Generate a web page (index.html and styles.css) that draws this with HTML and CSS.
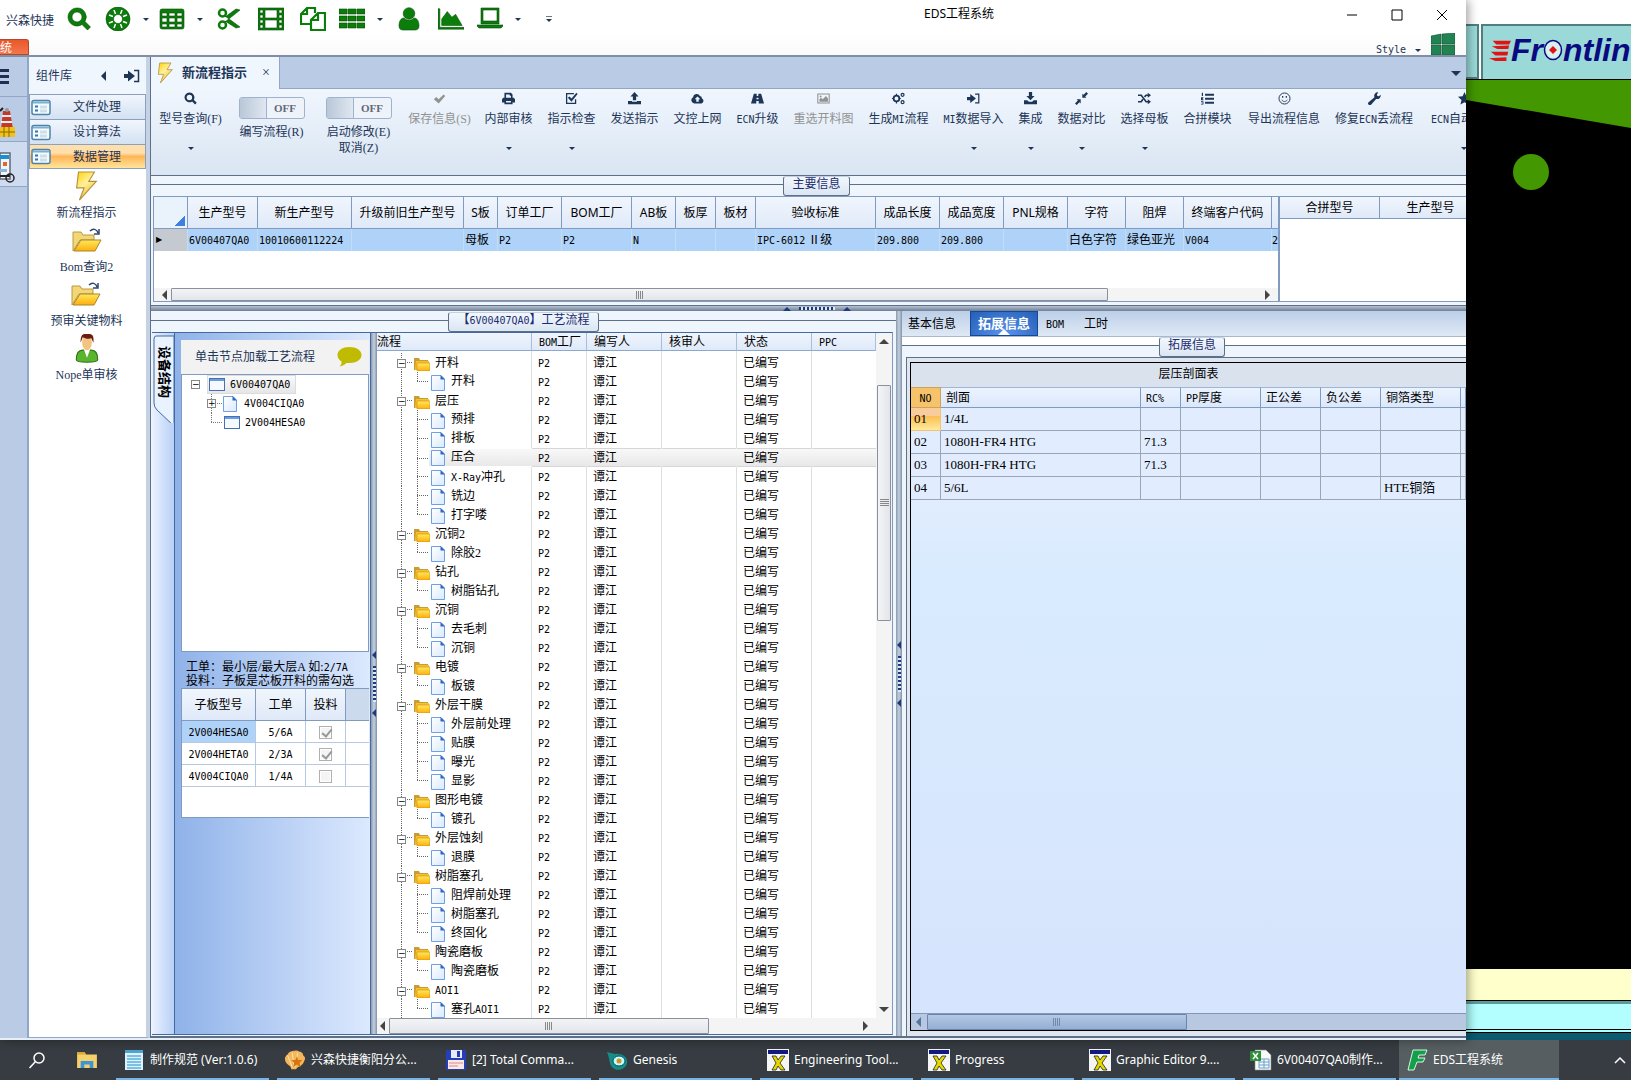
FILE: index.html
```html
<!DOCTYPE html>
<html lang="zh-CN">
<head>
    <meta charset="UTF-8">
    <meta name="viewport" content="width=device-width, initial-scale=1.0">
    <title>EDS工程系统</title>
    <link rel="stylesheet" href="styles.css">
</head>
<body>
    <!-- Icon sprite -->
    <svg class="sprite" aria-hidden="true">
        <symbol id="search" viewBox="0 0 24 24"><path d="M10 1a9 9 0 1 0 5 16.500l5.500 5.500 3-3-5.500-5.500A9 9 0 0 0 10 1zm0 4a5 5 0 1 1 0 10 5 5 0 0 1 0-10z" fill-rule="evenodd"/></symbol>
        <symbol id="ring" viewBox="0 0 24 24"><path d="M12 0a12 12 0 1 0 0 24 12 12 0 0 0 0-24zm0 7.500a4.500 4.500 0 1 1 0 9 4.500 4.500 0 0 1 0-9z" fill-rule="evenodd"/><path d="M8 3l1.500 4M16 3l-1.500 4M8 21l1.500-4M16 21l-1.500-4M3 8l4 1.500M3 16l4-1.500M21 8l-4 1.500M21 16l-4-1.500" stroke="#fff" stroke-width="1.500"/></symbol>
        <symbol id="grid" viewBox="0 0 24 24"><path d="M2 2h20a2 2 0 0 1 2 2v16a2 2 0 0 1-2 2H2a2 2 0 0 1-2-2V4a2 2 0 0 1 2-2zm0 4v3h5V6zm7 0v3h6V6zm8 0v3h5V6zM2 11v4h5v-4zm7 0v4h6v-4zm8 0v4h5v-4zM2 17v3h5v-3zm7 0v3h6v-3zm8 0v3h5v-3z" fill-rule="evenodd"/></symbol>
        <symbol id="scissors" viewBox="0 0 24 24"><path d="M8 9L23 20l-4 1L8 14M8 15L23 3l-4-1L8 10"/><circle cx="5.500" cy="6" r="3.500" fill="none" stroke="currentColor" stroke-width="2.500"/><circle cx="5.500" cy="18" r="3.500" fill="none" stroke="currentColor" stroke-width="2.500"/></symbol>
        <symbol id="film" viewBox="0 0 26 24"><path d="M0 1h26v22H0zm2 2v3h3V3zm0 5v3h3V8zm0 5v3h3v-3zm0 5v3h3v-3zM7 3v8h12V3zm0 10v8h12v-8zM21 3v3h3V3zm0 5v3h3V8zm0 5v3h3v-3zm0 5v3h3v-3z" fill-rule="evenodd"/></symbol>
        <symbol id="copy" viewBox="0 0 26 24"><path d="M7 1h8v5M1 7v10h9M7 1v6H1zM18 6h7v17H11V13zM18 6v7h-7" fill="none" stroke="currentColor" stroke-width="2.200"/></symbol>
        <symbol id="bars" viewBox="0 0 26 24"><path d="M0 2h8v5H0zM9 2h8v5H9zM18 2h8v5h-8zM0 9h8v5H0zM9 9h8v5H9zM18 9h8v5h-8zM0 16h8v5H0zM9 16h8v5H9zM18 16h8v5h-8z"/></symbol>
        <symbol id="user" viewBox="0 0 20 24"><circle cx="10" cy="6.500" r="5.800"/><path d="M0 19c0-5 2-8 5-8 3 3 7 3 10 0 3 0 5 3 5 8 0 3-2 4-4 4H4c-2 0-4-1-4-4z"/></symbol>
        <symbol id="chart" viewBox="0 0 28 24"><path d="M0 1h2v20h26v2H0zM4 19v-7l6-8 5 6 4-3 7 12z"/></symbol>
        <symbol id="laptop" viewBox="0 0 26 24"><path d="M4 1h18v16H4zm2 2v11h14V3zM0 18h26v1l-2 2H2l-2-2z" fill-rule="evenodd"/></symbol>
        <symbol id="check" viewBox="0 0 16 16"><path d="M1 9l3-3 3 3 6-6 2 2-8 9z"/></symbol>
        <symbol id="print" viewBox="0 0 16 16"><path d="M3 1h8l2 2v4h1.500L16 9v4h-3v2H3v-2H0V9l1.500-2H3zm2 2v4h6V4.500H9.500V3zm0 8v2h6v-2z" fill-rule="evenodd"/></symbol>
        <symbol id="checkbox" viewBox="0 0 16 16"><path d="M11 2H2v12h11V9" fill="none" stroke="currentColor" stroke-width="1.600"/><path d="M3.500 7l2-1.500L8 8l6-7 1.500 1.500L8 12z"/></symbol>
        <symbol id="upload" viewBox="0 0 16 16"><path d="M8 0l5 5.500h-3V10H6V5.500H3zM0 11h5v1h6v-1h5v4H0z"/></symbol>
        <symbol id="download" viewBox="0 0 16 16"><path d="M6 0h4v5h3l-5 5-5-5h3zM0 10h4l2 2h4l2-2h4v5H0z"/></symbol>
        <symbol id="cloud" viewBox="0 0 16 16"><path d="M4 14a4 4 0 0 1-1.500-7.500A4.500 4.500 0 0 1 11 5a3 3 0 0 1 2.500 3A3.200 3.200 0 0 1 13 14zm4-8.500L4.500 9h2v3h3V9h2z" fill-rule="evenodd"/></symbol>
        <symbol id="road" viewBox="0 0 16 16"><path d="M3.500 2H7v3h2V2h3.500L16 14H9.500v-3h-3v3H0zM7 7l-.5 2h3L9 7z" fill-rule="evenodd"/></symbol>
        <symbol id="image" viewBox="0 0 16 16"><path d="M1 2.500h14v11H1z" fill="none" stroke="currentColor" stroke-width="1.300"/><path d="M3 12V9l2-2 2 2 4-4 2.500 3v4z"/><circle cx="4.500" cy="5.500" r="1.200"/></symbol>
        <symbol id="gears" viewBox="0 0 16 16"><circle cx="5.500" cy="8" r="3.500" fill="none" stroke="currentColor" stroke-width="2.200"/><path d="M5.500 2v12M0 8h11" stroke="currentColor" stroke-width="1.500" stroke-dasharray="2 8"/><circle cx="13" cy="3.500" r="1.800" fill="none" stroke="currentColor" stroke-width="1.500"/><circle cx="13" cy="12.500" r="1.800" fill="none" stroke="currentColor" stroke-width="1.500"/></symbol>
        <symbol id="signin" viewBox="0 0 16 16"><path d="M0 6h4V2.500L11 8l-7 5.500V10H0z"/><path d="M10 2.500h4.500v11H10" fill="none" stroke="currentColor" stroke-width="1.500"/></symbol>
        <symbol id="compress" viewBox="0 0 16 16"><path d="M9 7V2l1.500 1.500L14 0l2 2-3.500 3.500L14 7zM7 9v5l-1.500-1.500L2 16l-2-2 3.500-3.500L2 9z"/></symbol>
        <symbol id="shuffle" viewBox="0 0 16 16"><path d="M0 4h4l6 8h3M0 12h4l2-3M8 6l2-2h3" fill="none" stroke="currentColor" stroke-width="2"/><path d="M12 1l4 3-4 3zM12 9l4 3-4 3z"/></symbol>
        <symbol id="list" viewBox="0 0 16 16"><path d="M5 2h11v2.500H5zM5 7h11v2.500H5zM5 12h11v2.500H5zM1 1h1.500v4H1zM0 6.500h3v1L1.500 9H3v1H0zM0 11.500h3v4H0v-1h2v-2H0z"/></symbol>
        <symbol id="smile" viewBox="0 0 16 16"><circle cx="8" cy="8" r="6.800" fill="none" stroke="currentColor" stroke-width="1.200"/><path d="M4.500 9.500c1.500 3 5.500 3 7 0" fill="none" stroke="currentColor"/><path d="M5 5h1.500v2H5zM9.500 5H11v2H9.500z"/></symbol>
        <symbol id="wrench" viewBox="0 0 16 16"><path d="M15.500 3.500A4.300 4.300 0 0 1 10 8.500L4 15.500a2.200 2.200 0 0 1-3.300-3L8 6.500A4.300 4.300 0 0 1 12.500.5L11 3l.5 2 2 .3z"/></symbol>
        <symbol id="star" viewBox="0 0 16 16"><path d="M8 0l2.300 5.300 5.700.6-4.300 3.800L13 15.500 8 12.500 3 15.500l1.300-5.800L0 5.900l5.700-.6z"/></symbol>
        <symbol id="bolt" viewBox="0 0 24 32"><path d="M4 1h17l-6 10h8L5 31l5-13H2z" fill="url(#gold)" stroke="#b3913a" stroke-width="1.200"/></symbol>
        <symbol id="open" viewBox="0 0 30 24"><path d="M1 23V4h8l2 3h11v5H8z" fill="#f3d675" stroke="#b89a45"/><path d="M2 23l7-11h20l-6 11z" fill="url(#sun)" stroke="#a8862e"/><path d="M18 3c3-3 7-2 8 2M27 1v5h-5" fill="none" stroke="#33476c" stroke-width="1.500"/></symbol>
        <symbol id="person" viewBox="0 0 22 28"><path d="M1 25c0-6 2-9 6-9h8c4 0 6 3 6 9 0 3-20 3-20 0z" fill="#58b52c" stroke="#2e6d16"/><path d="M8 15h6l-3 8z" fill="#fff"/><ellipse cx="11" cy="9" rx="4.500" ry="7" fill="#f3c480"/><path d="M5 9c0-9 3-8 6-8s7-1 6 8l-2-4c-3 1-6 0-8-1z" fill="#6b1d10"/></symbol>
        <symbol id="form" viewBox="0 0 20 16"><rect x="1" y="1" width="18" height="14" rx="2" fill="#f4faff" stroke="#4c83a8" stroke-width="1.500"/><path d="M2 2h16v2H2z" fill="#79b1cf"/><path d="M4 7h3M4 11h3" stroke="#2a77b8" stroke-width="2"/><path d="M9 6h7v3H9zM9 10h7v3H9z" fill="#cfdfe9"/></symbol>
        <symbol id="folder" viewBox="0 0 16 14"><path d="M0 13V1h5l1 2h8v10z" fill="#c99c35"/><path d="M2 4h13v9H1z" fill="#f5c22b"/><path d="M3 6h13v8H3z" fill="url(#sun)" stroke="#c98b10" stroke-width=".6"/></symbol>
        <symbol id="doc" viewBox="0 0 14 16"><path d="M.5.5H10L13.500 4v11.500H.5z" fill="url(#sheet)" stroke="#6f9fe6"/><path d="M9.500 0v4.500H14z" fill="#2f66c0"/></symbol>
        <symbol id="win" viewBox="0 0 16 13"><rect x=".5" y=".5" width="15" height="12" fill="#f6f9ff" stroke="#4670b0"/><path d="M1 1h14v2H1z" fill="#6c9ce0"/></symbol>
        <symbol id="xwin" viewBox="0 0 22 22"><rect width="22" height="22" fill="#f5f5f5"/><path d="M1 1h20v4H1z" fill="#111a80"/><path d="M5 7h4l2 4 3-4h4l-5 7 5 7h-4l-3-4-2 4H5l4-7z" fill="#e3d800" stroke="#222" stroke-width=".8"/></symbol>
        <linearGradient id="gold" x2=".6" y2="1"><stop offset="0" stop-color="#ffd400"/><stop offset=".5" stop-color="#fff0a0"/><stop offset="1" stop-color="#ecb91c"/></linearGradient>
        <linearGradient id="sun" x2="0" y2="1"><stop offset="0" stop-color="#ffe85c"/><stop offset="1" stop-color="#ffae0c"/></linearGradient>
        <linearGradient id="sheet" x2="1" y2="1"><stop offset="0" stop-color="#fff"/><stop offset="1" stop-color="#d9eaff"/></linearGradient>
    </svg>

    <div class="desktop">
        <div class="window">
            <!-- Title bar -->
            <header class="titlebar">
                <div class="quick">
                    <span class="brand">兴森快捷</span>
                    <button class="q" aria-label="搜索"><svg><use href="#search"/></svg></button>
                    <button class="q drop" aria-label="帮助"><svg><use href="#ring"/></svg></button>
                    <button class="q drop" aria-label="表格"><svg><use href="#grid"/></svg></button>
                    <button class="q" aria-label="剪切"><svg><use href="#scissors"/></svg></button>
                    <button class="q" aria-label="胶片"><svg><use href="#film"/></svg></button>
                    <button class="q" aria-label="复制"><svg><use href="#copy"/></svg></button>
                    <button class="q drop" aria-label="列表"><svg><use href="#bars"/></svg></button>
                    <button class="q" aria-label="用户"><svg><use href="#user"/></svg></button>
                    <button class="q" aria-label="图表"><svg><use href="#chart"/></svg></button>
                    <button class="q drop" aria-label="电脑"><svg><use href="#laptop"/></svg></button>
                    <button class="more" aria-label="更多"></button>
                </div>
                <h1>EDS工程系统</h1>
                <div class="controls">
                    <button aria-label="最小化"><svg viewBox="0 0 12 12"><path d="M1 6h10"/></svg></button>
                    <button aria-label="最大化"><svg viewBox="0 0 12 12"><path d="M1 1h10v10H1z"/></svg></button>
                    <button aria-label="关闭"><svg viewBox="0 0 12 12"><path d="M1 1l10 10M11 1L1 11"/></svg></button>
                </div>
                <div class="style-menu">
                    <button class="style-btn">Style</button>
                    <svg class="flag" viewBox="0 0 24 22"><path d="M0 3l10-2v10H0zM11 1l13-1v11H11zM0 12h10v10H0zM11 12h13v10H11z" fill="#218352" stroke="#174f34" stroke-width=".6"/></svg>
                </div>
                <button class="sys-tab">统</button>
            </header>

            <div class="client">
                <nav class="rail">
                    <button class="rail-menu" aria-label="菜单"><svg viewBox="0 0 9 18"><path d="M0 1h9v3H0zM0 7h9v3H0zM0 13h9v3H0z"/></svg></button>
                    <button class="rail-item" aria-label="生产"><svg viewBox="0 0 16 32"><path d="M3 4h7l3 18H1z" fill="#c5392c"/><path d="M2 9h9M1 15h11" stroke="#eee" stroke-width="2"/><circle cx="7" cy="3" r="2" fill="#999"/><path d="M0 20h15v10H0z" fill="#f2c21b"/><path d="M0 25h15M4 20v10M9 20v10" stroke="#8a6a00"/><path d="M0 4l3-3" stroke="#222" stroke-width="2"/></svg></button>
                    <button class="rail-item" aria-label="文档"><svg viewBox="0 0 16 32"><path d="M0 1h10v26H0z" fill="#eef5fb" stroke="#667" stroke-width="1.500"/><path d="M0 3h9v4H0z" fill="#1b8fd0"/><path d="M3 10h4v4H3z" fill="#e0662a"/><path d="M0 17h7v3H0z" fill="#8bb8d8"/><path d="M0 24h10" stroke="#222" stroke-width="2"/><circle cx="10" cy="26" r="4" fill="none" stroke="#222" stroke-width="1.500"/></svg></button>
                </nav>

                <!-- Component library -->
                <aside class="library">
                    <div class="library-head">
                        <span>组件库</span>
                        <button class="tri-left" aria-label="收起"></button>
                        <button class="dock" aria-label="停靠"><svg><use href="#signin"/></svg></button>
                    </div>
                    <button class="group"><svg><use href="#form"/></svg><span>文件处理</span></button>
                    <button class="group"><svg><use href="#form"/></svg><span>设计算法</span></button>
                    <button class="group active"><svg><use href="#form"/></svg><span>数据管理</span></button>
                    <div class="tools">
                        <button><svg><use href="#bolt"/></svg>新流程指示</button>
                        <button><svg><use href="#open"/></svg>Bom查询2</button>
                        <button><svg><use href="#open"/></svg>预审关键物料</button>
                        <button><svg><use href="#person"/></svg>Nope单审核</button>
                    </div>
                </aside>

                <main class="main">
                    <div class="doc-tabs">
                        <div class="doc-tab"><svg><use href="#bolt"/></svg><b>新流程指示</b><button aria-label="关闭标签">×</button></div>
                        <button class="tab-list" aria-label="标签列表"></button>
                    </div>

                    <!-- Ribbon -->
                    <div class="ribbon">
                        <button class="cmd w-m drop"><svg><use href="#search"/></svg><span>型号查询(F)</span></button>
                        <div class="switch"><button class="toggle" id="sw-write" role="switch" aria-checked="false"><i></i><b>OFF</b></button><label for="sw-write">编写流程(R)</label></div>
                        <div class="switch"><button class="toggle" id="sw-edit" role="switch" aria-checked="false"><i></i><b>OFF</b></button><label for="sw-edit">启动修改(E)<br>取消(Z)</label></div>
                        <button class="cmd w-m" disabled><svg><use href="#check"/></svg><span>保存信息(S)</span></button>
                        <button class="cmd drop"><svg><use href="#print"/></svg><span>内部审核</span></button>
                        <button class="cmd drop"><svg><use href="#checkbox"/></svg><span>指示检查</span></button>
                        <button class="cmd"><svg><use href="#upload"/></svg><span>发送指示</span></button>
                        <button class="cmd"><svg><use href="#cloud"/></svg><span>文控上网</span></button>
                        <button class="cmd w-s"><svg><use href="#road"/></svg><span><code>ECN</code>升级</span></button>
                        <button class="cmd w-m" disabled><svg><use href="#image"/></svg><span>重选开料图</span></button>
                        <button class="cmd w-m"><svg><use href="#gears"/></svg><span>生成<code>MI</code>流程</span></button>
                        <button class="cmd w-m drop"><svg><use href="#signin"/></svg><span><code>MI</code>数据导入</span></button>
                        <button class="cmd w-xs drop"><svg><use href="#download"/></svg><span>集成</span></button>
                        <button class="cmd drop"><svg><use href="#compress"/></svg><span>数据对比</span></button>
                        <button class="cmd drop"><svg><use href="#shuffle"/></svg><span>选择母板</span></button>
                        <button class="cmd"><svg><use href="#list"/></svg><span>合拼模块</span></button>
                        <button class="cmd w-l"><svg><use href="#smile"/></svg><span>导出流程信息</span></button>
                        <button class="cmd w-l"><svg><use href="#wrench"/></svg><span>修复<code>ECN</code>丢流程</span></button>
                        <button class="cmd w-l drop"><svg><use href="#star"/></svg><span><code>ECN</code>自动流程</span></button>
                    </div>

                    <!-- Main info -->
                    <section class="info">
                        <div class="legend shift"><h2>主要信息</h2></div>
                        <div class="info-body">
                            <div class="info-left">
                                <table class="info-table">
                                    <colgroup><col class="c34"><col class="c70"><col class="c94"><col class="c112"><col class="c34"><col class="c64"><col class="c70"><col class="c44"><col class="c40"><col class="c40"><col class="c120"><col class="c64"><col class="c64"><col class="c64"><col class="c58"><col class="c58"><col class="c88"><col></colgroup>
                                    <thead><tr><th class="corner"></th><th>生产型号</th><th>新生产型号</th><th>升级前旧生产型号</th><th>S板</th><th>订单工厂</th><th>BOM工厂</th><th>AB板</th><th>板厚</th><th>板材</th><th>验收标准</th><th>成品长度</th><th>成品宽度</th><th>PNL规格</th><th>字符</th><th>阻焊</th><th>终端客户代码</th><th></th></tr></thead>
                                    <tbody><tr><td class="marker">▶</td><td><code>6V00407QA0</code></td><td><code>10010600112224</code></td><td></td><td>母板</td><td><code>P2</code></td><td><code>P2</code></td><td><code>N</code></td><td></td><td></td><td><code>IPC-6012</code> Ⅱ级</td><td><code>209.800</code></td><td><code>209.800</code></td><td></td><td>白色字符</td><td>绿色亚光</td><td><code>V004</code></td><td><code>2</code></td></tr></tbody>
                                </table>
                                <div class="hbar"><i class="al"></i><div class="track"><div class="thumb info-thumb"></div></div><i class="ar"></i></div>
                            </div>
                            <div class="info-right">
                                <table class="merge-table"><thead><tr><th>合拼型号</th><th>生产型号</th></tr></thead></table>
                            </div>
                        </div>
                    </section>
                    <div class="hsplit"><i class="au"></i><span></span><i class="au"></i></div>

                    <div class="lower">
                        <!-- Process flow -->
                        <section class="flow">
                            <div class="legend"><h2>【<code>6V00407QA0</code>】工艺流程</h2></div>
                            <div class="flow-body">
                                <div class="side-tab">
                                    <svg viewBox="0 0 22 90"><path d="M22 3H4Q2 3 2 6v64q0 4 3 7l17 16z" fill="#e9f2ff" stroke="#44699c"/></svg>
                                    <b>设备结构</b>
                                </div>
                                <div class="structure">
                                    <div class="hint"><span>单击节点加载工艺流程</span><svg viewBox="0 0 24 20"><path d="M12 0c7 0 12 3.500 12 8s-5 8-12 8H9c-2 2-4 3-7 3.500 2-1.500 2-3 2-5C1.500 13 0 11 0 8c0-4.500 5-8 12-8z" fill="#bfbb00"/></svg></div>
                                    <ul class="parts">
                                        <li class="root"><button class="exp" aria-label="折叠">−</button><span class="sel"><svg class="wi"><use href="#win"/></svg><code>6V00407QA0</code></span></li>
                                        <li class="sub"><button class="exp" aria-label="展开">+</button><svg class="di"><use href="#doc"/></svg><code>4V004CIQA0</code></li>
                                        <li class="sub end"><svg class="wi"><use href="#win"/></svg><code>2V004HESA0</code></li>
                                    </ul>
                                    <p class="note">工单：最小层/最大层A 如:<code>2/7A</code><br>投料：子板是芯板开料的需勾选</p>
                                    <div class="boards">
                                        <table>
                                            <colgroup><col class="c74"><col class="c50"><col class="c40"><col></colgroup>
                                            <thead><tr><th>子板型号</th><th>工单</th><th>投料</th><th></th></tr></thead>
                                            <tbody>
                                                <tr><td class="on"><code>2V004HESA0</code></td><td><code>5/6A</code></td><td><input type="checkbox" aria-label="投料 2V004HESA0" checked disabled></td><td></td></tr>
                                                <tr><td><code>2V004HETA0</code></td><td><code>2/3A</code></td><td><input type="checkbox" aria-label="投料 2V004HETA0" checked disabled></td><td></td></tr>
                                                <tr><td><code>4V004CIQA0</code></td><td><code>1/4A</code></td><td><input type="checkbox" aria-label="投料 4V004CIQA0" disabled></td><td></td></tr>
                                            </tbody>
                                        </table>
                                    </div>
                                </div>
                                <div class="vsplit"><i class="al"></i><span></span><i class="al"></i></div>
                                <div class="process">
                                    <div class="process-main">
                                        <table class="tree">
                                            <colgroup><col class="c155"><col class="c55"><col class="c75"><col class="c75"><col class="c75"><col></colgroup>
                                            <thead><tr><th>流程</th><th><code>BOM</code>工厂</th><th>编写人</th><th>核审人</th><th>状态</th><th><code>PPC</code></th></tr></thead>
                                            <tbody>
                                                <tr class="gap"><td></td><td></td><td></td><td></td><td></td><td></td></tr>
                                                <tr class="dir"><td><button class="exp" aria-label="折叠">−</button><svg><use href="#folder"/></svg>开料</td><td><code>P2</code></td><td>谭江</td><td></td><td>已编写</td><td></td></tr>
                                                <tr class="end"><td><svg><use href="#doc"/></svg>开料</td><td><code>P2</code></td><td>谭江</td><td></td><td>已编写</td><td></td></tr>
                                                <tr class="dir"><td><button class="exp" aria-label="折叠">−</button><svg><use href="#folder"/></svg>层压</td><td><code>P2</code></td><td>谭江</td><td></td><td>已编写</td><td></td></tr>
                                                <tr><td><svg><use href="#doc"/></svg>预排</td><td><code>P2</code></td><td>谭江</td><td></td><td>已编写</td><td></td></tr>
                                                <tr><td><svg><use href="#doc"/></svg>排板</td><td><code>P2</code></td><td>谭江</td><td></td><td>已编写</td><td></td></tr>
                                                <tr class="selected"><td><svg><use href="#doc"/></svg>压合</td><td><code>P2</code></td><td>谭江</td><td></td><td>已编写</td><td></td></tr>
                                                <tr><td><svg><use href="#doc"/></svg><code>X-Ray</code>冲孔</td><td><code>P2</code></td><td>谭江</td><td></td><td>已编写</td><td></td></tr>
                                                <tr><td><svg><use href="#doc"/></svg>铣边</td><td><code>P2</code></td><td>谭江</td><td></td><td>已编写</td><td></td></tr>
                                                <tr class="end"><td><svg><use href="#doc"/></svg>打字喽</td><td><code>P2</code></td><td>谭江</td><td></td><td>已编写</td><td></td></tr>
                                                <tr class="dir"><td><button class="exp" aria-label="折叠">−</button><svg><use href="#folder"/></svg>沉铜2</td><td><code>P2</code></td><td>谭江</td><td></td><td>已编写</td><td></td></tr>
                                                <tr class="end"><td><svg><use href="#doc"/></svg>除胶2</td><td><code>P2</code></td><td>谭江</td><td></td><td>已编写</td><td></td></tr>
                                                <tr class="dir"><td><button class="exp" aria-label="折叠">−</button><svg><use href="#folder"/></svg>钻孔</td><td><code>P2</code></td><td>谭江</td><td></td><td>已编写</td><td></td></tr>
                                                <tr class="end"><td><svg><use href="#doc"/></svg>树脂钻孔</td><td><code>P2</code></td><td>谭江</td><td></td><td>已编写</td><td></td></tr>
                                                <tr class="dir"><td><button class="exp" aria-label="折叠">−</button><svg><use href="#folder"/></svg>沉铜</td><td><code>P2</code></td><td>谭江</td><td></td><td>已编写</td><td></td></tr>
                                                <tr><td><svg><use href="#doc"/></svg>去毛刺</td><td><code>P2</code></td><td>谭江</td><td></td><td>已编写</td><td></td></tr>
                                                <tr class="end"><td><svg><use href="#doc"/></svg>沉铜</td><td><code>P2</code></td><td>谭江</td><td></td><td>已编写</td><td></td></tr>
                                                <tr class="dir"><td><button class="exp" aria-label="折叠">−</button><svg><use href="#folder"/></svg>电镀</td><td><code>P2</code></td><td>谭江</td><td></td><td>已编写</td><td></td></tr>
                                                <tr class="end"><td><svg><use href="#doc"/></svg>板镀</td><td><code>P2</code></td><td>谭江</td><td></td><td>已编写</td><td></td></tr>
                                                <tr class="dir"><td><button class="exp" aria-label="折叠">−</button><svg><use href="#folder"/></svg>外层干膜</td><td><code>P2</code></td><td>谭江</td><td></td><td>已编写</td><td></td></tr>
                                                <tr><td><svg><use href="#doc"/></svg>外层前处理</td><td><code>P2</code></td><td>谭江</td><td></td><td>已编写</td><td></td></tr>
                                                <tr><td><svg><use href="#doc"/></svg>贴膜</td><td><code>P2</code></td><td>谭江</td><td></td><td>已编写</td><td></td></tr>
                                                <tr><td><svg><use href="#doc"/></svg>曝光</td><td><code>P2</code></td><td>谭江</td><td></td><td>已编写</td><td></td></tr>
                                                <tr class="end"><td><svg><use href="#doc"/></svg>显影</td><td><code>P2</code></td><td>谭江</td><td></td><td>已编写</td><td></td></tr>
                                                <tr class="dir"><td><button class="exp" aria-label="折叠">−</button><svg><use href="#folder"/></svg>图形电镀</td><td><code>P2</code></td><td>谭江</td><td></td><td>已编写</td><td></td></tr>
                                                <tr class="end"><td><svg><use href="#doc"/></svg>镀孔</td><td><code>P2</code></td><td>谭江</td><td></td><td>已编写</td><td></td></tr>
                                                <tr class="dir"><td><button class="exp" aria-label="折叠">−</button><svg><use href="#folder"/></svg>外层蚀刻</td><td><code>P2</code></td><td>谭江</td><td></td><td>已编写</td><td></td></tr>
                                                <tr class="end"><td><svg><use href="#doc"/></svg>退膜</td><td><code>P2</code></td><td>谭江</td><td></td><td>已编写</td><td></td></tr>
                                                <tr class="dir"><td><button class="exp" aria-label="折叠">−</button><svg><use href="#folder"/></svg>树脂塞孔</td><td><code>P2</code></td><td>谭江</td><td></td><td>已编写</td><td></td></tr>
                                                <tr><td><svg><use href="#doc"/></svg>阻焊前处理</td><td><code>P2</code></td><td>谭江</td><td></td><td>已编写</td><td></td></tr>
                                                <tr><td><svg><use href="#doc"/></svg>树脂塞孔</td><td><code>P2</code></td><td>谭江</td><td></td><td>已编写</td><td></td></tr>
                                                <tr class="end"><td><svg><use href="#doc"/></svg>终固化</td><td><code>P2</code></td><td>谭江</td><td></td><td>已编写</td><td></td></tr>
                                                <tr class="dir"><td><button class="exp" aria-label="折叠">−</button><svg><use href="#folder"/></svg>陶瓷磨板</td><td><code>P2</code></td><td>谭江</td><td></td><td>已编写</td><td></td></tr>
                                                <tr class="end"><td><svg><use href="#doc"/></svg>陶瓷磨板</td><td><code>P2</code></td><td>谭江</td><td></td><td>已编写</td><td></td></tr>
                                                <tr class="dir"><td><button class="exp" aria-label="折叠">−</button><svg><use href="#folder"/></svg><code>AOI1</code></td><td><code>P2</code></td><td>谭江</td><td></td><td>已编写</td><td></td></tr>
                                                <tr class="end"><td><svg><use href="#doc"/></svg>塞孔<code>AOI1</code></td><td><code>P2</code></td><td>谭江</td><td></td><td>已编写</td><td></td></tr>
                                            </tbody>
                                        </table>
                                        <div class="vbar"><i class="au"></i><div class="vtrack"><div class="vthumb"></div></div><i class="ad"></i></div>
                                    </div>
                                    <div class="hbar process-bar"><i class="al"></i><div class="track"><div class="thumb process-thumb"></div></div><i class="ar"></i></div>
                                </div>
                            </div>
                        </section>

                        <div class="vsplit"><i class="al"></i><span></span><i class="al"></i></div>

                        <!-- Extended info -->
                        <section class="extend">
                            <nav class="tabs">
                                <button>基本信息</button>
                                <button class="current">拓展信息</button>
                                <button><code>BOM</code></button>
                                <button>工时</button>
                            </nav>
                            <div class="legend shift"><h2>拓展信息</h2></div>
                            <div class="stack">
                                <div class="stack-inner">
                                    <table>
                                        <caption>层压剖面表</caption>
                                        <colgroup><col class="c30"><col class="c200"><col class="c40"><col class="c80"><col class="c60"><col class="c60"><col class="c80"><col></colgroup>
                                        <thead><tr><th class="no"><code>NO</code></th><th>剖面</th><th><code>RC%</code></th><th><code>PP</code>厚度</th><th>正公差</th><th>负公差</th><th>铜箔类型</th><th></th></tr></thead>
                                        <tbody>
                                            <tr><td class="hot">01</td><td>1/4L</td><td></td><td></td><td></td><td></td><td></td><td></td></tr>
                                            <tr><td>02</td><td>1080H-FR4 HTG</td><td>71.3</td><td></td><td></td><td></td><td></td><td></td></tr>
                                            <tr><td>03</td><td>1080H-FR4 HTG</td><td>71.3</td><td></td><td></td><td></td><td></td><td></td></tr>
                                            <tr><td>04</td><td>5/6L</td><td></td><td></td><td></td><td></td><td>HTE铜箔</td><td></td></tr>
                                        </tbody>
                                    </table>
                                    <div class="hbar blue"><i class="al"></i><div class="track"><div class="thumb stack-thumb"></div></div></div>
                                </div>
                            </div>
                        </section>
                    </div>
                </main>
            </div>
        </div>

        <!-- Application behind the window -->
        <div class="behind">
            <div class="behind-bar">
                <div class="slot"></div>
                <div class="logo"><svg viewBox="0 0 24 26"><path d="M4 3h20l-2 4H8zM3 9l19-1-1 4H9zM2 15h19l-1 4H7zM0 22l19-1v4H7z" fill="#e11414"/></svg><span>Fr</span><svg class="target" viewBox="0 0 20 22"><ellipse cx="10" cy="11" rx="8.500" ry="9.500" fill="#d9f0f0" stroke="#0a0a80" stroke-width="1.500"/><path d="M10 7l4 4-4 4-4-4z" fill="#e11414"/></svg><span>ntline</span></div>
            </div>
            <svg class="board" viewBox="0 0 165 889" preserveAspectRatio="none"><path d="M0 0h165v48L0 20z" fill="#439700"/><ellipse cx="65" cy="92" rx="18" ry="18" fill="#439700"/></svg>
            <div class="behind-foot"><div class="cream"></div><div class="cyan"></div></div>
        </div>
    </div>

    <!-- Taskbar -->
    <footer class="taskbar">
        <button class="icon-only" aria-label="搜索"><svg viewBox="0 0 18 18"><circle cx="11" cy="7" r="5" fill="none" stroke="#fff" stroke-width="1.500"/><path d="M7.500 10.500L1.500 17" stroke="#fff" stroke-width="1.500"/></svg></button>
        <button class="icon-only" aria-label="资源管理器"><svg viewBox="0 0 22 20"><path d="M0 1h8l2 3h12v15H0z" fill="#f6d06b"/><path d="M0 1h8l2 3H0z" fill="#d9a83a"/><path d="M4 19v-8h14v8h-4v-4H8v4z" fill="#3a96d6"/></svg></button>
        <button class="task"><svg viewBox="0 0 22 22"><path d="M2 1h18v20H2z" fill="#dff1fa"/><path d="M2 1h18v3H2z" fill="#4fa4cf"/><path d="M4 7h14M4 10h14M4 13h14M4 16h14M4 19h14" stroke="#58b3de" stroke-width="1.500"/></svg><span>制作规范 (Ver:1.0.6)</span></button>
        <button class="task"><svg viewBox="0 0 24 22"><path d="M12 1c3-1 4 1 5 1 3 0 4 3 4 4 3 2 2 5 1 6-1 4-5 6-7 7l-2 2H8l-1-3C3 16 1 13 1 10c0-2 1-4 3-5 1-3 5-4 8-4z" fill="#f4b65a"/><path d="M4 6l5 13M9 3l2 16M15 3l-3 16" stroke="#fde6b8"/><path d="M14 7l1.500 4H20l-3 3 1 5-4-3-4 3 1-5-3-3h4.500z" fill="#d8740e"/></svg><span>兴森快捷衡阳分公...</span></button>
        <button class="task"><svg viewBox="0 0 22 22"><path d="M1 1h20v20H1z" fill="#2340b8"/><path d="M6 1h11v8H6z" fill="#e9ecf6"/><path d="M12 2h3v6h-3z" fill="#2340b8"/><path d="M3 11h16v9H3z" fill="#fbe9e6"/><path d="M4 14h14M4 17h9" stroke="#d88"/></svg><span>[2] Total Comma...</span></button>
        <button class="task"><svg viewBox="0 0 22 22"><path d="M1 3l8 2c8-1 13 4 12 9-1 6-9 9-14 5-4-3-3-9-6-16z" fill="#178d87"/><ellipse cx="13" cy="12" rx="6" ry="5" fill="#bff" stroke="#056"/><circle cx="13" cy="12" r="2.500" fill="#e58a1f"/></svg><span>Genesis</span></button>
        <button class="task"><svg><use href="#xwin"/></svg><span>Engineering Tool...</span></button>
        <button class="task"><svg><use href="#xwin"/></svg><span>Progress</span></button>
        <button class="task"><svg><use href="#xwin"/></svg><span>Graphic Editor 9....</span></button>
        <button class="task"><svg viewBox="0 0 22 22"><path d="M5 1h11l5 5v15H5z" fill="#f7fbf8" stroke="#888" stroke-width=".6"/><path d="M9 10h10v9H9zM9 13h10M9 16h10M14 10v9" fill="none" stroke="#6a9fd0"/><path d="M0 2h11v10H0z" fill="#2f8f3b"/><path d="M3 4l5 6M8 4l-5 6" stroke="#fff" stroke-width="1.500"/></svg><span>6V00407QA0制作...</span></button>
        <button class="task running"><svg viewBox="0 0 22 22"><path d="M7 1h14l-2 5h-6l-1 3h7l-2 4h-6l-3 8H2z" fill="#12a04b" stroke="#d9f5e2"/></svg><span>EDS工程系统</span></button>
        <button class="tray" aria-label="显示隐藏的图标"><svg viewBox="0 0 12 8"><path d="M1 7l5-5 5 5" fill="none" stroke="#fff" stroke-width="1.500"/></svg></button>
    </footer>
</body>
</html>
```

FILE: styles.css
```css
* {
    box-sizing: border-box;
}
body {
    margin: 0;
    height: 100vh;
    display: flex;
    flex-direction: column;
    overflow: hidden;
    font-family: "Liberation Serif", "Noto Sans CJK SC", serif;
    font-size: 12px;
    line-height: 16px;
    color: #000;
}
button {
    font: inherit;
    color: inherit;
    background: none;
    border: 0;
    padding: 0;
    margin: 0;
    flex: none;
    white-space: nowrap;
}
code {
    font-family: "DejaVu Sans Mono", monospace;
    font-size: 10px;
    line-height: 1;
}
svg {
    display: block;
    fill: currentColor;
    flex: none;
}
table {
    border-collapse: separate;
    border-spacing: 0;
    table-layout: fixed;
    width: 100%;
}
th, td {
    padding: 0;
    font-weight: normal;
    text-align: left;
    white-space: nowrap;
    overflow: hidden;
}
h1, h2, p, ul {
    margin: 0;
    padding: 0;
    font-weight: normal;
    font-size: 12px;
}
.sprite {
    position: absolute;
    width: 0;
    height: 0;
}
.desktop {
    flex: 1;
    min-height: 0;
    display: grid;
    grid-template-columns: minmax(0, 1fr) 165px;
    grid-template-rows: minmax(0, 1fr);
}
.window {
    display: flex;
    flex-direction: column;
    min-height: 0;
    background: #fff;
    border-bottom: 2px solid #e8eef6;
    box-shadow: 2px 0 10px rgba(0, 0, 0, 0.4);
    z-index: 1;
}

/* title bar */
.titlebar {
    position: relative;
    height: 57px;
    flex: none;
    border-bottom: 2px solid #808fa6;
    background: linear-gradient(#fff 60%, #fafafa);
}
.quick {
    display: flex;
    align-items: center;
    height: 38px;
    padding-left: 6px;
    color: #0a7d0a;
}
.brand {
    color: #1d3557;
    width: 50px;
    margin-top: 4px;
    white-space: nowrap;
}
.q {
    width: 39px;
    margin-left: 3px;
    display: flex;
    align-items: center;
    justify-content: center;
}
.q svg {
    width: 26px;
    height: 24px;
    stroke: #064f06;
    stroke-width: 0.6px;
}
.q.drop {
    width: 54px;
    gap: 12px;
    margin-left: 0;
    padding-left: 4px;
}
.drop::after, .style-btn::after, .more::after {
    content: "";
    border: 3px solid transparent;
    border-top-color: #1d3557;
    border-bottom: 0;
}
.more {
    margin-left: 22px;
    border-top: 1px solid #777;
    padding-top: 2px;
    display: flex;
}
.titlebar h1 {
    position: absolute;
    left: 924px;
    top: 6px;
    font-family: "Noto Sans", "Noto Sans CJK SC", sans-serif;
}
.controls {
    position: absolute;
    right: 18px;
    top: 9px;
    display: flex;
    gap: 33px;
}
.controls svg {
    width: 12px;
    height: 12px;
    fill: none;
    stroke: #000;
}
.style-menu {
    position: absolute;
    right: 11px;
    bottom: 0;
    display: flex;
    align-items: flex-end;
    gap: 10px;
    height: 22px;
}
.style-btn {
    display: flex;
    align-items: center;
    gap: 9px;
    height: 10px;
    font-family: "DejaVu Sans Mono", monospace;
    font-size: 10px;
    color: #1d3557;
}
.flag {
    width: 24px;
    height: 22px;
}
.sys-tab {
    position: absolute;
    left: 0;
    bottom: 0;
    width: 29px;
    height: 16px;
    text-align: left;
    overflow: hidden;
    color: #fff;
    background: linear-gradient(#e9572b, #f2774a);
    border: 1px solid #b5482a;
    border-left: 0;
    border-radius: 0 3px 0 0;
}

/* client area */
.client {
    flex: 1;
    min-height: 0;
    display: grid;
    grid-template-columns: 28px 122px minmax(0, 1fr);
    grid-template-rows: minmax(0, 1fr);
}
.rail {
    background: #b9cbe5;
    display: flex;
    flex-direction: column;
    border-right: 1px solid #92a7c8;
}
.rail-menu {
    height: 40px;
    color: #1d2f50;
    border-bottom: 1px solid #92a7c8;
}
.rail-menu svg {
    width: 9px;
    height: 18px;
}
.rail-item {
    height: 45px;
    padding-top: 8px;
    border-bottom: 1px solid #92a7c8;
}
.rail-item + .rail-item {
    background: #cfdcf0;
}
.rail-item svg {
    width: 16px;
    height: 32px;
}
.library {
    display: flex;
    flex-direction: column;
    border: 1px solid #92a7c8;
    border-top: 0;
    border-right: 4px solid #c5d2e6;
    background: #fff;
    color: #1d3557;
}
.library-head {
    display: flex;
    align-items: center;
    height: 37px;
    padding: 0 6px 0 7px;
    background: #f0f6fe;
}
.tri-left {
    margin-left: auto;
    margin-right: 18px;
    border: 5px solid transparent;
    border-right-color: #1d3557;
    border-left: 0;
}
.dock svg {
    width: 16px;
    height: 16px;
}
.group {
    display: flex;
    align-items: center;
    height: 25px;
    padding-left: 1px;
    background: linear-gradient(#f1f6fd, #d3e1f2);
    border: 1px solid #8ba0bf;
    border-bottom: 0;
}
.group svg {
    width: 20px;
    height: 17px;
}
.group span {
    margin-left: 22px;
}
.group.active {
    border-bottom: 1px solid #8ba0bf;
    background: linear-gradient(#ffe0ad 0 35%, #ffb657 50%, #ffe59b);
}
.tools {
    display: flex;
    flex-direction: column;
    align-items: center;
    padding-right: 2px;
}
.tools button {
    display: flex;
    flex-direction: column;
    align-items: center;
    justify-content: flex-end;
    gap: 4px;
    height: 54px;
    padding-bottom: 2px;
}
.tools svg {
    width: 30px;
    height: 30px;
}

/* main column */
.main {
    display: flex;
    flex-direction: column;
    min-width: 0;
    background: #eef5fd;
    border-left: 1px solid #5f6f87;
}
.doc-tabs {
    display: flex;
    align-items: flex-start;
    justify-content: space-between;
    height: 32px;
    flex: none;
    background: #b9cbe5;
    border-bottom: 1px solid #92a7c8;
}
.doc-tab {
    display: flex;
    align-items: center;
    height: 32px;
    width: 129px;
    padding-left: 6px;
    background: #f0f6fe;
    border-right: 1px solid #92a7c8;
    color: #1d3557;
}
.doc-tab svg {
    width: 16px;
    height: 22px;
}
.doc-tab b {
    margin: 0 15px 0 9px;
    font-size: 13px;
}
.doc-tab button {
    font-size: 14px;
}
.tab-list {
    margin: 14px 5px 0 0;
    border: 5px solid transparent;
    border-top-color: #1d3557;
    border-bottom: 0;
}
.ribbon {
    display: flex;
    align-items: flex-start;
    height: 87px;
    flex: none;
    overflow: hidden;
    padding-left: 2px;
    color: #1d3557;
    background: linear-gradient(#f0f6fe, #d9e5f2);
    border-bottom: 1px solid #5f6f87;
}
.cmd {
    display: flex;
    flex-direction: column;
    align-items: center;
    width: 63px;
    padding-top: 3px;
}
.cmd svg {
    width: 13px;
    height: 13px;
    margin-bottom: 6px;
}
.cmd.drop::after {
    margin-top: 20px;
}
.cmd:disabled {
    color: #929292;
}
.w-xs { width: 39px; }
.w-s { width: 57px; }
.w-m { width: 75px; }
.w-l { width: 90px; }
.switch {
    display: flex;
    flex-direction: column;
    align-items: center;
    width: 87px;
    flex: none;
    padding-top: 8px;
    gap: 5px;
    text-align: center;
}
.toggle {
    display: flex;
    width: 66px;
    height: 22px;
    border: 1px solid #9fb3d0;
    border-radius: 3px;
    background: #eef3fa;
}
.toggle i {
    width: 27px;
    border-right: 1px solid #9fb3d0;
    background: linear-gradient(90deg, #b9c7d8, #dfe7f0);
}
.toggle b {
    flex: 1;
    line-height: 20px;
    font-size: 11px;
    color: #5e6878;
}

/* group captions, centred on a rule */
.legend {
    display: flex;
    justify-content: center;
    height: 20px;
    flex: none;
    background: linear-gradient(#5f6f87, #5f6f87) 0 8px / 100% 1px no-repeat;
}
.legend.shift {
    padding-left: 16px;
}
.legend h2 {
    height: 20px;
    padding: 0 8px;
    line-height: 14px;
    color: #1c2d6e;
    border: 1px solid #5f6f87;
    border-top-color: #c3d0e2;
    border-radius: 3px;
    background: linear-gradient(#f2f7fd, #dbe6f3);
}
.info {
    flex: none;
    display: flex;
    flex-direction: column;
    height: 130px;
    border-bottom: 1px solid #5f6f87;
}
.info-body {
    flex: 1;
    display: grid;
    grid-template-columns: minmax(0, 1fr) 186px;
    margin: 0 0 3px 2px;
    border: 1px solid #819bc0;
    border-right: 0;
    background: #fff;
}
.info-left {
    display: flex;
    flex-direction: column;
    min-width: 0;
    border-right: 2px solid #819bc0;
}
.info-right {
    overflow: hidden;
}
.info-left .hbar {
    margin-top: auto;
}
.info th, .boards th {
    text-align: center;
    font-family: "Noto Sans", "Noto Sans CJK SC", sans-serif;
    background: linear-gradient(#f1f6fd, #dfe9f8);
    border-right: 1px solid #819bc0;
    border-bottom: 1px solid #819bc0;
}
.info-table th {
    height: 32px;
}
.info-table td {
    height: 22px;
    padding-left: 1px;
    background: #afd3f8;
    border-right: 1px solid #bfdcf9;
}
.info-table th:last-child, .info-table td:last-child {
    padding-left: 0;
    border-right: 0;
}
.info-table .corner {
    background: linear-gradient(135deg, transparent 50%, #3f7fe0 50%) 21px 19px / 10px 10px no-repeat, #eaf2fc;
}
.info-table .marker {
    padding-left: 2px;
    font-size: 8px;
    font-family: "DejaVu Sans", sans-serif;
    background: #c5cad0;
}
.merge-table {
    width: 202px;
}
.merge-table th {
    height: 22px;
}
.merge-table th:first-child {
    width: 100px;
}

/* scroll bars */
.hbar {
    display: flex;
    align-items: center;
    height: 13px;
    flex: none;
    padding: 0 8px;
    background: #f4f4f4;
}
.track {
    flex: 1;
    margin: 0 4px;
    height: 100%;
}
.thumb {
    height: 100%;
    border: 1px solid #8b919a;
    border-radius: 1px;
    background: repeating-linear-gradient(90deg, #888 0 1px, transparent 1px 2px) center / 8px 8px no-repeat, linear-gradient(#f3f4f6, #e2e5ea);
}
.info-thumb { width: 86%; }
.process-thumb { width: 68%; }
.stack-thumb { width: 260px; }
.al, .ar, .au, .ad {
    border: 5px solid transparent;
}
.al { border-right-color: #444; border-left: 0; }
.ar { border-left-color: #444; border-right: 0; }
.au { border-bottom-color: #444; border-top: 0; }
.ad { border-top-color: #444; border-bottom: 0; }
.vbar {
    width: 16px;
    flex: none;
    display: flex;
    flex-direction: column;
    align-items: center;
    padding: 6px 0;
    background: #f4f4f4;
}
.vtrack {
    flex: 1;
    width: 14px;
    padding-top: 41px;
}
.vthumb {
    height: 38%;
    border: 1px solid #8b919a;
    border-radius: 1px;
    background: repeating-linear-gradient(#888 0 1px, transparent 1px 2px) center / 9px 8px no-repeat, linear-gradient(90deg, #f3f4f6, #e2e5ea);
}

/* splitters */
.hsplit {
    height: 5px;
    flex: none;
    display: flex;
    justify-content: center;
    align-items: center;
    gap: 8px;
    padding-left: 16px;
    background: linear-gradient(#b5c2d4, #6f7e93);
}
.hsplit span {
    width: 36px;
    height: 3px;
    background: repeating-linear-gradient(90deg, #1d3a7a 0 2px, #dfe8f5 2px 4px);
}
.hsplit .au {
    border-width: 0 4px 4px;
    border-bottom-color: #1d3a7a;
}
.vsplit {
    width: 6px;
    flex: none;
    background: linear-gradient(90deg, #8a99ad, #c3d0e0 50%, #8291a6);
    display: flex;
    flex-direction: column;
    align-items: center;
    justify-content: center;
    gap: 7px;
}
.vsplit span {
    width: 3px;
    height: 36px;
    background: repeating-linear-gradient(#1d3a7a 0 2px, #dfe8f5 2px 4px);
}
.vsplit .al {
    border-width: 4px 4px 4px 0;
    border-right-color: #1d3a7a;
}

/* lower half */
.lower {
    flex: 1;
    min-height: 0;
    display: grid;
    grid-template-columns: minmax(0, 1fr) 6px 564px;
    grid-template-rows: minmax(0, 1fr);
    border-bottom: 2px solid #5f6f87;
}
.flow, .extend {
    display: flex;
    flex-direction: column;
    min-width: 0;
    min-height: 0;
}
.flow .legend {
    margin-top: 1px;
}
.flow-body {
    flex: 1;
    min-height: 0;
    display: flex;
    margin: 0 3px 1px 1px;
    border-top: 1px solid #44699c;
    border-bottom: 1px solid #44699c;
    border-right: 1px solid #819bc0;
}
.side-tab {
    position: relative;
    width: 22px;
    flex: none;
    background: linear-gradient(90deg, #eaf2ff, #b8d0f6);
}
.side-tab svg {
    width: 22px;
    height: 90px;
}
.side-tab b {
    position: absolute;
    left: 4px;
    top: 13px;
    font-size: 13px;
    writing-mode: vertical-rl;
    text-orientation: sideways;
}
.structure {
    width: 197px;
    flex: none;
    padding: 7px 1px 0 6px;
    display: flex;
    flex-direction: column;
    border-left: 1px solid #44699c;
    border-right: 1px solid #44699c;
    background: linear-gradient(90deg, #8fb2e9, #dce9fe);
}
.hint {
    display: flex;
    align-items: center;
    justify-content: space-between;
    height: 34px;
    padding: 0 7px 0 14px;
    background: #f2f2f2;
    color: #1d3557;
}
.hint svg {
    width: 25px;
    height: 20px;
}
.parts {
    height: 278px;
    list-style: none;
    background: #fff;
    border: 1px solid #819bc0;
}
.parts li {
    display: flex;
    align-items: center;
    height: 19px;
    gap: 7px;
    padding-left: 9px;
}
.parts .sub {
    padding-left: 25px;
    background: repeating-linear-gradient(#777 0 1px, transparent 1px 2px) 29px 0 / 1px 100% no-repeat, repeating-linear-gradient(90deg, #777 0 1px, transparent 1px 2px) 29px 9px / 12px 1px no-repeat;
}
.parts .end {
    padding-left: 42px;
    gap: 5px;
    background-size: 1px 50%, 12px 1px;
}
.parts .sel {
    display: flex;
    align-items: center;
    gap: 5px;
    height: 19px;
    padding: 0 5px 0 1px;
    border: 1px solid #dcdcdc;
    background: linear-gradient(#fafafa, #e6e6e6);
}
.wi {
    width: 16px;
    height: 13px;
}
.di {
    width: 14px;
    height: 16px;
}
.exp {
    width: 9px;
    height: 9px;
    border: 1px solid #888;
    background: #fff;
    font-family: "DejaVu Sans", sans-serif;
    font-size: 9px;
    line-height: 7px;
    text-align: center;
}
.note {
    padding: 8px 0 0 5px;
    height: 36px;
    line-height: 14px;
    white-space: nowrap;
}
.boards {
    height: 130px;
    background: #fff;
    border: 1px solid #819bc0;
    border-right: 0;
}
.boards th {
    height: 32px;
}
.boards th:last-child {
    background: #ccdaee;
    border-right: 0;
}
.boards td {
    height: 22px;
    text-align: center;
    border-right: 1px solid #b5c9e6;
    border-bottom: 1px solid #b5c9e6;
}
.boards td:last-child {
    border-right: 0;
}
.boards .on {
    background: #afd3f8;
}
.boards input {
    appearance: none;
    width: 13px;
    height: 13px;
    margin: 0;
    vertical-align: middle;
    border: 1px solid #b0b0b0;
    background: #f4f4f4;
    box-shadow: inset 0 0 0 1px #fff;
}
.boards input:checked::after {
    content: "";
    display: block;
    width: 4px;
    height: 8px;
    margin: 0 0 0 4px;
    border: solid #999;
    border-width: 0 2px 2px 0;
    transform: rotate(40deg);
}
.process {
    flex: 1;
    min-width: 0;
    display: flex;
    flex-direction: column;
    background: #fff;
}
.process-main {
    flex: 1;
    min-height: 0;
    display: flex;
    overflow: hidden;
}
.tree {
    flex: 1;
    min-width: 0;
    height: max-content;
}
.tree th {
    height: 18px;
    padding-left: 7px;
    background: linear-gradient(#eff5fd, #dfe9f8);
    border-right: 1px solid #a9bedc;
    border-bottom: 1px solid #8ba8cf;
}
.tree th:first-child {
    padding-left: 0;
}
.tree td {
    height: 19px;
    padding-left: 6px;
    line-height: 18px;
    border-right: 1px solid #dedede;
}
.tree tr.gap td {
    height: 2px;
    line-height: 0;
}
.tree td:last-child {
    border-right: 0;
}
.tree td:first-child {
    padding-left: 54px;
    background: repeating-linear-gradient(#666 0 1px, transparent 1px 2px) 24px 0 / 1px 100% no-repeat, repeating-linear-gradient(#666 0 1px, transparent 1px 2px) 40px 0 / 1px 100% no-repeat, repeating-linear-gradient(90deg, #666 0 1px, transparent 1px 2px) 40px 9px / 11px 1px no-repeat;
}
.tree .end td:first-child {
    background-size: 1px 100%, 1px 50%, 11px 1px;
}
.tree .dir td:first-child {
    padding-left: 20px;
    background: repeating-linear-gradient(#666 0 1px, transparent 1px 2px) 24px 0 / 1px 100% no-repeat, repeating-linear-gradient(90deg, #666 0 1px, transparent 1px 2px) 24px 9px / 11px 1px no-repeat;
}
.tree .gap td:first-child {
    background: none;
}
.tree svg {
    display: inline-block;
    width: 14px;
    height: 16px;
    margin-right: 6px;
    vertical-align: middle;
}
.tree .dir svg {
    width: 16px;
    height: 14px;
    margin: 0 5px 0 8px;
}
.tree .exp {
    vertical-align: middle;
}
.tree .selected td {
    border-right-color: transparent;
    border-top: 1px solid #d6d6d6;
    border-bottom: 1px solid #d6d6d6;
    background: linear-gradient(#f8f8f8, #e8e8e8);
    line-height: 16px;
}
.tree .selected td:first-child {
    border-top-color: transparent;
    border-bottom-color: transparent;
    background: linear-gradient(#f8f8f8, #e8e8e8) 52px 0 / 100% 100% no-repeat, repeating-linear-gradient(#666 0 1px, transparent 1px 2px) 24px 0 / 1px 100% no-repeat, repeating-linear-gradient(#666 0 1px, transparent 1px 2px) 40px 0 / 1px 100% no-repeat, repeating-linear-gradient(90deg, #666 0 1px, transparent 1px 2px) 40px 9px / 11px 1px no-repeat;
}
.process-bar {
    height: 16px;
    padding: 0 24px 0 3px;
}

/* right pane */
.tabs {
    display: flex;
    height: 26px;
    flex: none;
    background: linear-gradient(#bccfe8, #dfe9f5);
    border-bottom: 1px solid #a8b9ce;
}
.tabs button {
    padding: 0 8px;
}
.tabs button:first-child {
    padding: 0 14px 0 6px;
}
.tabs .current {
    position: relative;
    padding: 0 7px;
    color: #fff;
    font-weight: bold;
    font-size: 13px;
    background: radial-gradient(ellipse at bottom, #5b93ea, #2460b8);
    border: 1px solid #15479a;
}
.tabs .current::after {
    content: "";
    position: absolute;
    left: 50%;
    bottom: 0;
    margin-left: -6px;
    border: 6px solid transparent;
    border-bottom-color: #fff;
    border-top: 0;
}
.tabs button:last-child {
    padding-left: 12px;
}
.extend .legend {
    background: linear-gradient(#5f6f87, #5f6f87) 0 8px / 100% 1px no-repeat, linear-gradient(#fff, #fff) 0 0 / 100% 8px no-repeat;
}
.stack {
    flex: 1;
    min-height: 0;
    margin-left: 4px;
    padding: 4px 0 5px 3px;
    border: 1px solid #5f6f87;
    border-right: 0;
    border-bottom: 0;
    background: #dfe6ef;
}
.stack-inner {
    height: 100%;
    display: flex;
    flex-direction: column;
    border: 1px solid #000;
    border-right: 0;
    background: linear-gradient(#e1edff 20%, #d9ebfe 32%, #d6e4fd);
}
.stack caption {
    height: 24px;
    line-height: 23px;
    background: #dae2ee;
}
.stack th {
    height: 21px;
    padding-left: 5px;
    background: linear-gradient(#eaf3ff, #dce8fb);
    border-top: 1px solid #9fb6d8;
    border-right: 1px solid #819bc0;
    border-bottom: 1px solid #819bc0;
}
.stack .no {
    padding: 0;
    text-align: center;
    background: #f6c36a;
    border-color: #c9a45c;
}
.stack td {
    height: 23px;
    padding-left: 3px;
    font-size: 13px;
    border-right: 1px solid #9ba5b4;
    border-bottom: 1px solid #9ba5b4;
}
.stack .hot {
    border-color: #f2c377;
    background: linear-gradient(#f9cd9b 0 35%, #fbbd52 36%, #ffeb9c);
}
.hbar.blue {
    height: 17px;
    margin-top: auto;
    padding: 0 0 0 5px;
    background: #b7c8e0;
    border-top: 1px solid #8398b8;
}
.blue .track {
    margin: 0 0 0 6px;
}
.blue .thumb {
    border-color: #6886b0;
    background: repeating-linear-gradient(90deg, #7089ad 0 1px, transparent 1px 2px) center / 8px 8px no-repeat, linear-gradient(#b4c8e4, #94afd2);
}
.blue .al {
    border-right-color: #56759e;
}

/* column widths */
.c30 { width: 30px; }
.c34 { width: 34px; }
.c40 { width: 40px; }
.c44 { width: 44px; }
.c50 { width: 50px; }
.c55 { width: 55px; }
.c58 { width: 58px; }
.c60 { width: 60px; }
.c64 { width: 64px; }
.c70 { width: 70px; }
.c74 { width: 74px; }
.c75 { width: 75px; }
.c80 { width: 80px; }
.c88 { width: 88px; }
.c94 { width: 94px; }
.c112 { width: 112px; }
.c120 { width: 120px; }
.c155 { width: 155px; }
.c200 { width: 200px; }

/* application behind */
.behind {
    display: flex;
    flex-direction: column;
    min-height: 0;
    overflow: hidden;
    background: #000;
}
.behind-bar {
    display: flex;
    gap: 2px;
    height: 80px;
    flex: none;
    padding-top: 24px;
    background: #fff;
    border-bottom: 1px solid #000;
}
.slot {
    width: 13px;
    flex: none;
    border: 2px solid #4f7f7f;
    border-left: 0;
    background: #9bd9d9;
}
.logo {
    flex: 1;
    min-width: 0;
    overflow: hidden;
    display: flex;
    align-items: center;
    padding: 0 0 6px 6px;
    border-top: 2px solid #4f7f7f;
    border-left: 2px solid #4f7f7f;
    background: #9bd9d9;
    color: #0a0a80;
    font-family: "Liberation Sans", sans-serif;
    font-size: 32px;
    line-height: 36px;
    font-weight: bold;
    font-style: italic;
}
.logo svg {
    width: 22px;
    height: 24px;
}
.logo .target {
    width: 20px;
}
.board {
    flex: 1;
    min-height: 0;
    width: 100%;
}
.behind-foot {
    height: 71px;
    flex: none;
    background: #0b5a70;
}
.cream {
    height: 32px;
    background: #ffffcc;
    border-bottom: 1px solid #000;
}
.cyan {
    height: 32px;
    background: #b3ffff;
    border-top: 3px solid #5f9a9a;
    border-bottom: 4px double #000;
}

/* taskbar */
.taskbar {
    display: flex;
    height: 40px;
    flex: none;
    padding-left: 12px;
    color: #fff;
    background: #363c41;
    font-family: "Noto Sans", "Noto Sans CJK SC", sans-serif;
}
.icon-only {
    width: 50px;
    display: flex;
    align-items: center;
    justify-content: center;
}
.icon-only svg {
    width: 20px;
    height: 18px;
}
.task {
    flex: 0 1 153px;
    min-width: 0;
    display: flex;
    align-items: center;
    gap: 5px;
    margin-left: 8px;
    padding: 1px 0 0 7px;
    border-bottom: 2px solid #76b4ea;
    overflow: hidden;
}
.task:nth-child(3) {
    margin-left: 4px;
}
.task svg {
    width: 22px;
    height: 22px;
}
.task.running {
    flex-basis: 160px;
    margin-left: 3px;
    background: #565e62;
}
.tray {
    margin-left: auto;
    padding-right: 5px;
}
.tray svg {
    width: 12px;
    height: 8px;
}
```
